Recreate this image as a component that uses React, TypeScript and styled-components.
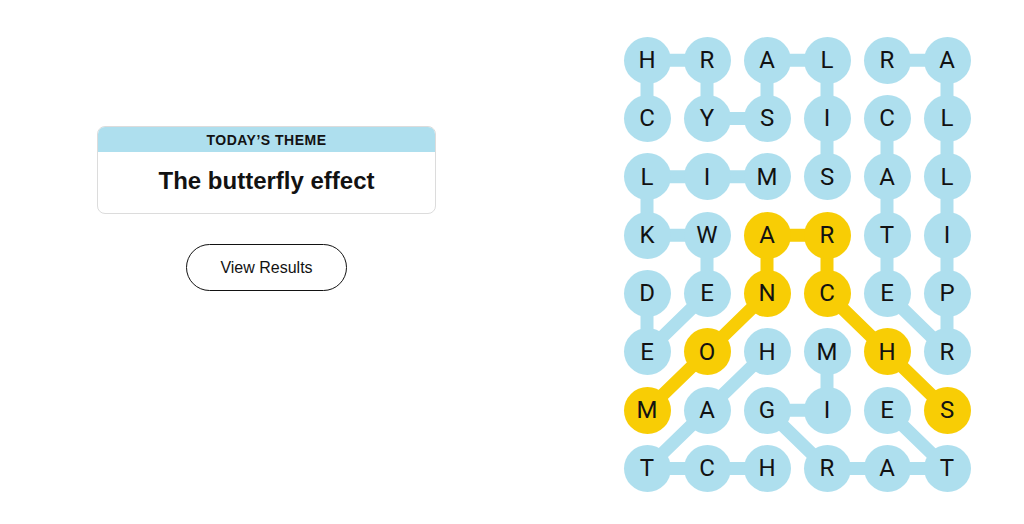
import React from "react";
import styled, { createGlobalStyle } from "styled-components";

const GlobalStyle = createGlobalStyle`
  html, body {
    margin: 0;
    padding: 0;
    background: #ffffff;
  }
  body {
    font-family: "Liberation Sans", Arial, sans-serif;
    color: #121212;
  }
`;

const BLUE = "#aedfee";
const YELLOW = "#f8cd05";

const COL_W = 60;
const ROW_H = 58.33;
const DOT = 47;

const LETTERS = [
  "HRALRA",
  "CYSICL",
  "LIMSAL",
  "KWARTI",
  "DENCEP",
  "EOHMHR",
  "MAGIES",
  "TCHRAT",
];

type Cell = [number, number];

interface Word {
  path: Cell[];
  spangram?: boolean;
}

// found words, each as a chain of [col, row]
const WORDS: Word[] = [
  { path: [[0, 1], [0, 0], [1, 0], [1, 1], [2, 1], [2, 0], [3, 0], [3, 1], [3, 2]] },
  { path: [[4, 1], [4, 2], [4, 3], [4, 4], [5, 5], [5, 4], [5, 3], [5, 2], [5, 1], [5, 0], [4, 0]] },
  { path: [[2, 2], [1, 2], [0, 2], [0, 3], [1, 3], [1, 4], [0, 5], [0, 4]] },
  { path: [[3, 5], [3, 6], [2, 6], [3, 7], [4, 7], [5, 7], [4, 6]] },
  { path: [[2, 5], [1, 6], [0, 7], [1, 7], [2, 7]] },
  {
    path: [[0, 6], [1, 5], [2, 4], [2, 3], [3, 3], [3, 4], [4, 5], [5, 6]],
    spangram: true,
  },
];

const spangramCells = new Set(
  WORDS.filter(w => w.spangram).flatMap(w => w.path.map(([c, r]) => `${c}-${r}`)),
);

const Page = styled.div`
  display: flex;
  align-items: flex-start;
  width: 1024px;
  height: 524px;
  overflow: hidden;
`;

const Sidebar = styled.div`
  width: 533px;
  padding-top: 126px;
  display: flex;
  flex-direction: column;
  align-items: center;
  gap: 30px;
`;

const ThemeCard = styled.div`
  width: 339px;
  border: 1px solid #dcdcdc;
  border-radius: 8px;
  overflow: hidden;
  box-sizing: border-box;
`;

const ThemeHeader = styled.div`
  height: 25px;
  background: ${BLUE};
  display: flex;
  align-items: center;
  justify-content: center;
  font-size: 14px;
  font-weight: 700;
  letter-spacing: 0.5px;
  text-transform: uppercase;
`;

const ThemeTitle = styled.div`
  height: 61px;
  padding-bottom: 3px;
  box-sizing: border-box;
  display: flex;
  align-items: center;
  justify-content: center;
  font-size: 24px;
  font-weight: 700;
`;

const ResultsButton = styled.button`
  width: 161px;
  height: 47px;
  border: 1px solid #121212;
  border-radius: 24px;
  background: #ffffff;
  font-family: "Liberation Sans", Arial, sans-serif;
  font-size: 16px;
  color: #121212;
  cursor: pointer;
`;

const BoardColumn = styled.div`
  margin-left: 84px;
  padding-top: 31px;
`;

const Board = styled.div`
  position: relative;
  display: grid;
  grid-template-columns: repeat(6, ${COL_W}px);
  grid-template-rows: repeat(8, ${ROW_H}px);
`;

const Links = styled.svg`
  position: absolute;
  inset: 0;
  width: 100%;
  height: 100%;
`;

const Tile = styled.div`
  display: flex;
  align-items: center;
  justify-content: center;
  position: relative;
`;

const Dot = styled.span<{ $spangram: boolean }>`
  width: ${DOT}px;
  height: ${DOT}px;
  border-radius: 50%;
  background: ${p => (p.$spangram ? YELLOW : BLUE)};
  display: flex;
  align-items: center;
  justify-content: center;
  font-family: Roboto, "Liberation Sans", sans-serif;
  font-size: 24px;
  color: #121212;
`;

const centre = ([c, r]: Cell) =>
  `${c * COL_W + COL_W / 2},${r * ROW_H + ROW_H / 2}`;

export default function App() {
  return (
    <>
      <GlobalStyle />
      <Page>
        <Sidebar>
          <ThemeCard>
            <ThemeHeader>Today’s theme</ThemeHeader>
            <ThemeTitle>The butterfly effect</ThemeTitle>
          </ThemeCard>
          <ResultsButton>View Results</ResultsButton>
        </Sidebar>
        <BoardColumn>
          <Board>
            <Links viewBox={`0 0 ${COL_W * 6} ${ROW_H * 8}`}>
              {WORDS.map((w, i) => (
                <polyline
                  key={i}
                  points={w.path.map(centre).join(" ")}
                  fill="none"
                  stroke={w.spangram ? YELLOW : BLUE}
                  strokeWidth={13}
                />
              ))}
            </Links>
            {LETTERS.map((row, r) =>
              row.split("").map((ch, c) => (
                <Tile key={`${c}-${r}`}>
                  <Dot $spangram={spangramCells.has(`${c}-${r}`)}>{ch}</Dot>
                </Tile>
              )),
            )}
          </Board>
        </BoardColumn>
      </Page>
    </>
  );
}
